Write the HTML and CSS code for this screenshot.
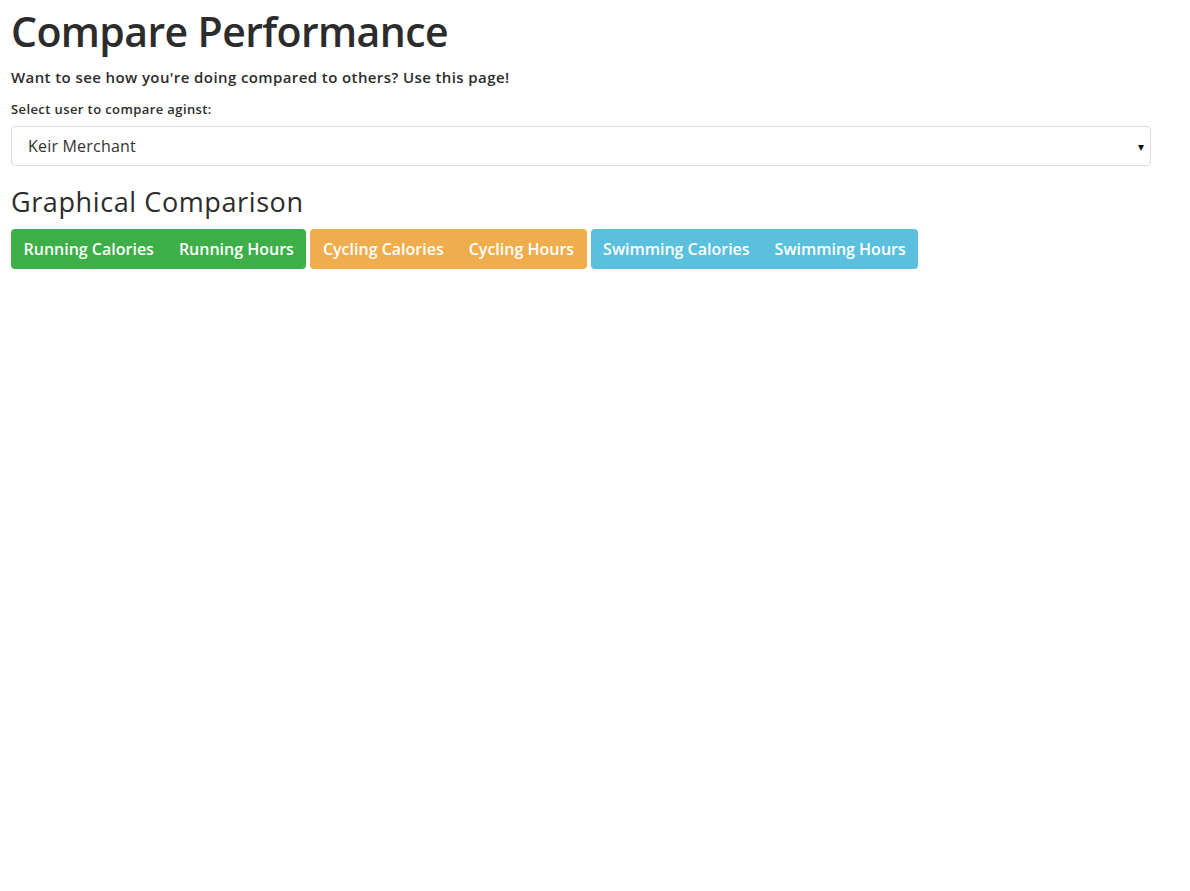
FILE: index.html
```html
<!DOCTYPE html>
<html>
<head>
<meta charset="utf-8">
<link rel="stylesheet" href="styles.css">
</head>
<body>
<div class="container">
  <h1 class="title">Compare Performance</h1>
  <p class="lead">Want to see how you're doing compared to others? Use this page!</p>
  <label class="label">Select user to compare aginst:</label>
  <div class="select">
    <span class="select-text">Keir Merchant</span>
    <span class="caret">&#9662;</span>
  </div>
  <h2 class="subtitle">Graphical Comparison</h2>
  <div class="groups">
    <div class="group green"><span class="btn">Running Calories</span><span class="btn">Running Hours</span></div>
    <div class="group orange"><span class="btn">Cycling Calories</span><span class="btn">Cycling Hours</span></div>
    <div class="group blue"><span class="btn">Swimming Calories</span><span class="btn">Swimming Hours</span></div>
  </div>
</div>
</body>
</html>
```
FILE: styles.css
```css
* { box-sizing: border-box; }
body {
  margin: 0;
  background: #fff;
  font-family: "Open Sans", "Liberation Sans", sans-serif;
  color: #2c2c2c;
}
.container {
  padding: 0 11px;
  display: flex;
  flex-direction: column;
  align-items: flex-start;
}
.title {
  margin: 7px 0 0 0;
  font-size: 41px;
  font-weight: 600;
  line-height: 48px;
  letter-spacing: -0.6px;
}
.lead {
  margin: 12px 0 0 0;
  font-size: 15px;
  font-weight: 600;
  line-height: 20px;
  letter-spacing: 0.4px;
}
.label {
  margin-top: 13px;
  font-size: 13px;
  font-weight: 600;
  line-height: 18px;
  letter-spacing: 0.4px;
}
.select {
  margin-top: 8px;
  width: 1140px;
  height: 40px;
  border: 1px solid #dcdcdc;
  border-radius: 4px;
  display: flex;
  align-items: center;
  justify-content: space-between;
  padding: 0 6px 0 16px;
}
.select-text { font-size: 16px; color: #333; letter-spacing: 0.2px; }
.caret { font-size: 12px; color: #111; }
.subtitle {
  margin: 19px 0 0 0;
  font-size: 27px;
  font-weight: 500;
  line-height: 34px;
  letter-spacing: 0.6px;
}
.groups {
  margin-top: 10px;
  display: flex;
  gap: 4px;
}
.group {
  display: flex;
  border-radius: 4px;
  height: 40px;
  align-items: center;
}
.btn {
  color: #fff;
  font-size: 16px;
  font-weight: 600;
  padding: 0 12.5px;
}
.green { background: #3dae48; }
.orange { background: #f0ad4e; }
.blue { background: #5bc0de; }
```
